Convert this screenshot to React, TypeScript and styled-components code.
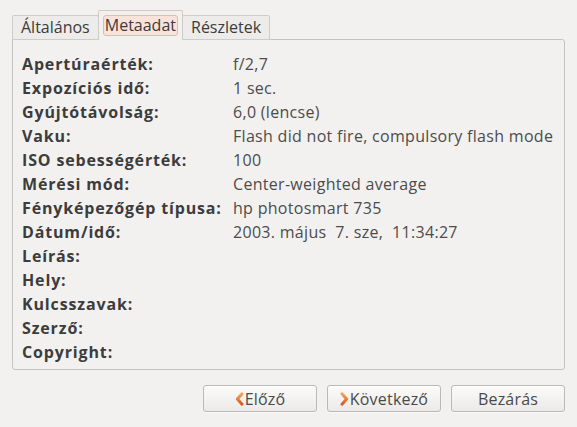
import * as React from "react";
import styled, { createGlobalStyle, css } from "styled-components";

const GlobalStyle = createGlobalStyle`
  html, body {
    margin: 0;
    background: #f2f1f0;
  }
  body {
    font-family: "Open Sans", "DejaVu Sans", sans-serif;
    font-size: 16px;
    color: #3c3c3c;
  }
`;

const Dialog = styled.div`
  width: 577px;
  height: 427px;
  box-sizing: border-box;
  padding: 11px 12px 0 12px;
  display: flex;
  flex-direction: column;
`;

const TabStrip = styled.div`
  display: flex;
  align-items: flex-end;
  height: 29px;
  position: relative;
  z-index: 1;
  margin-bottom: -1px;
`;

const Tab = styled.div<{ $active?: boolean }>`
  box-sizing: border-box;
  height: ${(p) => (p.$active ? "30px" : "25px")};
  padding: 0 ${(p) => (p.$active ? "4px" : "6px")};
  display: flex;
  align-items: center;
  border: 1px solid #cfccc8;
  border-bottom: none;
  border-radius: 2px 2px 0 0;
  background: ${(p) => (p.$active ? "#f2f1f0" : "#edecea")};
  font-size: 16px;
  color: #3c3c3c;
  & + & {
    margin-left: -1px;
  }
  ${(p) =>
    !p.$active &&
    css`
      border-bottom: 1px solid #cfccc8;
    `}
`;

const TabLabel = styled.span<{ $focused?: boolean }>`
  padding: 0 2px;
  line-height: 19px;
  border-radius: 3px;
  ${(p) =>
    p.$focused &&
    css`
      background: #f9e2da;
      border: 1px solid #e9b8a6;
      padding: 0 1px;
    `}
`;

const Panel = styled.div`
  box-sizing: border-box;
  height: 331px;
  border: 1px solid #c6c3bf;
  border-radius: 0 3px 3px 3px;
  padding: 12px 9px 4px 9px;
`;

const Grid = styled.div`
  display: grid;
  grid-template-columns: 211px 1fr;
  grid-auto-rows: 24px;
  align-items: center;
`;

const Label = styled.div`
  font-weight: 700;
  font-size: 16px;
  letter-spacing: 0.85px;
  color: #3c3c3c;
  white-space: nowrap;
`;

const Value = styled.div`
  font-size: 16px;
  letter-spacing: 0.3px;
  color: #4c4c4c;
  white-space: pre;
`;

const ButtonRow = styled.div`
  display: flex;
  justify-content: flex-end;
  gap: 10px;
  margin-top: 15px;
`;

const Button = styled.button`
  box-sizing: border-box;
  width: 114px;
  height: 27px;
  border: 1px solid #bcb8b4;
  border-radius: 3px;
  background: linear-gradient(#fbfbfa, #ebeae8);
  box-shadow: inset 0 1px 0 #ffffff, 0 1px 0 rgba(255, 255, 255, 0.6);
  display: flex;
  align-items: center;
  justify-content: center;
  gap: 1px;
  font-family: "Open Sans", "DejaVu Sans", sans-serif;
  font-weight: 400;
  font-size: 16px;
  letter-spacing: 0.2px;
  color: #4a4a4a;
  padding: 0;
`;

const Chevron = ({ dir }: { dir: "left" | "right" }) => (
  <svg width="9" height="14" viewBox="0 0 9 14">
    <defs>
      <linearGradient id={`cg-${dir}`} x1="0" y1="0" x2="0" y2="1">
        <stop offset="0" stopColor="#f6a25a" />
        <stop offset="1" stopColor="#dc5a22" />
      </linearGradient>
    </defs>
    <path
      d={dir === "left" ? "M7 1.8 L2.4 7 L7 12.2" : "M2 1.8 L6.6 7 L2 12.2"}
      fill="none"
      stroke={`url(#cg-${dir})`}
      strokeWidth="3"
      strokeLinejoin="round"
      strokeLinecap="round"
    />
  </svg>
);

const rows: Array<[string, string]> = [
  ["Apertúraérték:", "f/2,7"],
  ["Expozíciós idő:", "1 sec."],
  ["Gyújtótávolság:", "6,0 (lencse)"],
  ["Vaku:", "Flash did not fire, compulsory flash mode"],
  ["ISO sebességérték:", "100"],
  ["Mérési mód:", "Center-weighted average"],
  ["Fényképezőgép típusa:", "hp photosmart 735"],
  ["Dátum/idő:", "2003. május  7. sze,  11:34:27"],
  ["Leírás:", ""],
  ["Hely:", ""],
  ["Kulcsszavak:", ""],
  ["Szerző:", ""],
  ["Copyright:", ""],
];

export default function App() {
  return (
    <>
      <GlobalStyle />
      <Dialog>
        <TabStrip>
          <Tab>
            <TabLabel>Általános</TabLabel>
          </Tab>
          <Tab $active>
            <TabLabel $focused>Metaadat</TabLabel>
          </Tab>
          <Tab>
            <TabLabel>Részletek</TabLabel>
          </Tab>
        </TabStrip>
        <Panel>
          <Grid>
            {rows.map(([label, value]) => (
              <React.Fragment key={label}>
                <Label>{label}</Label>
                <Value>{value}</Value>
              </React.Fragment>
            ))}
          </Grid>
        </Panel>
        <ButtonRow>
          <Button>
            <Chevron dir="left" />
            Előző
          </Button>
          <Button>
            <Chevron dir="right" />
            Következő
          </Button>
          <Button>Bezárás</Button>
        </ButtonRow>
      </Dialog>
    </>
  );
}
